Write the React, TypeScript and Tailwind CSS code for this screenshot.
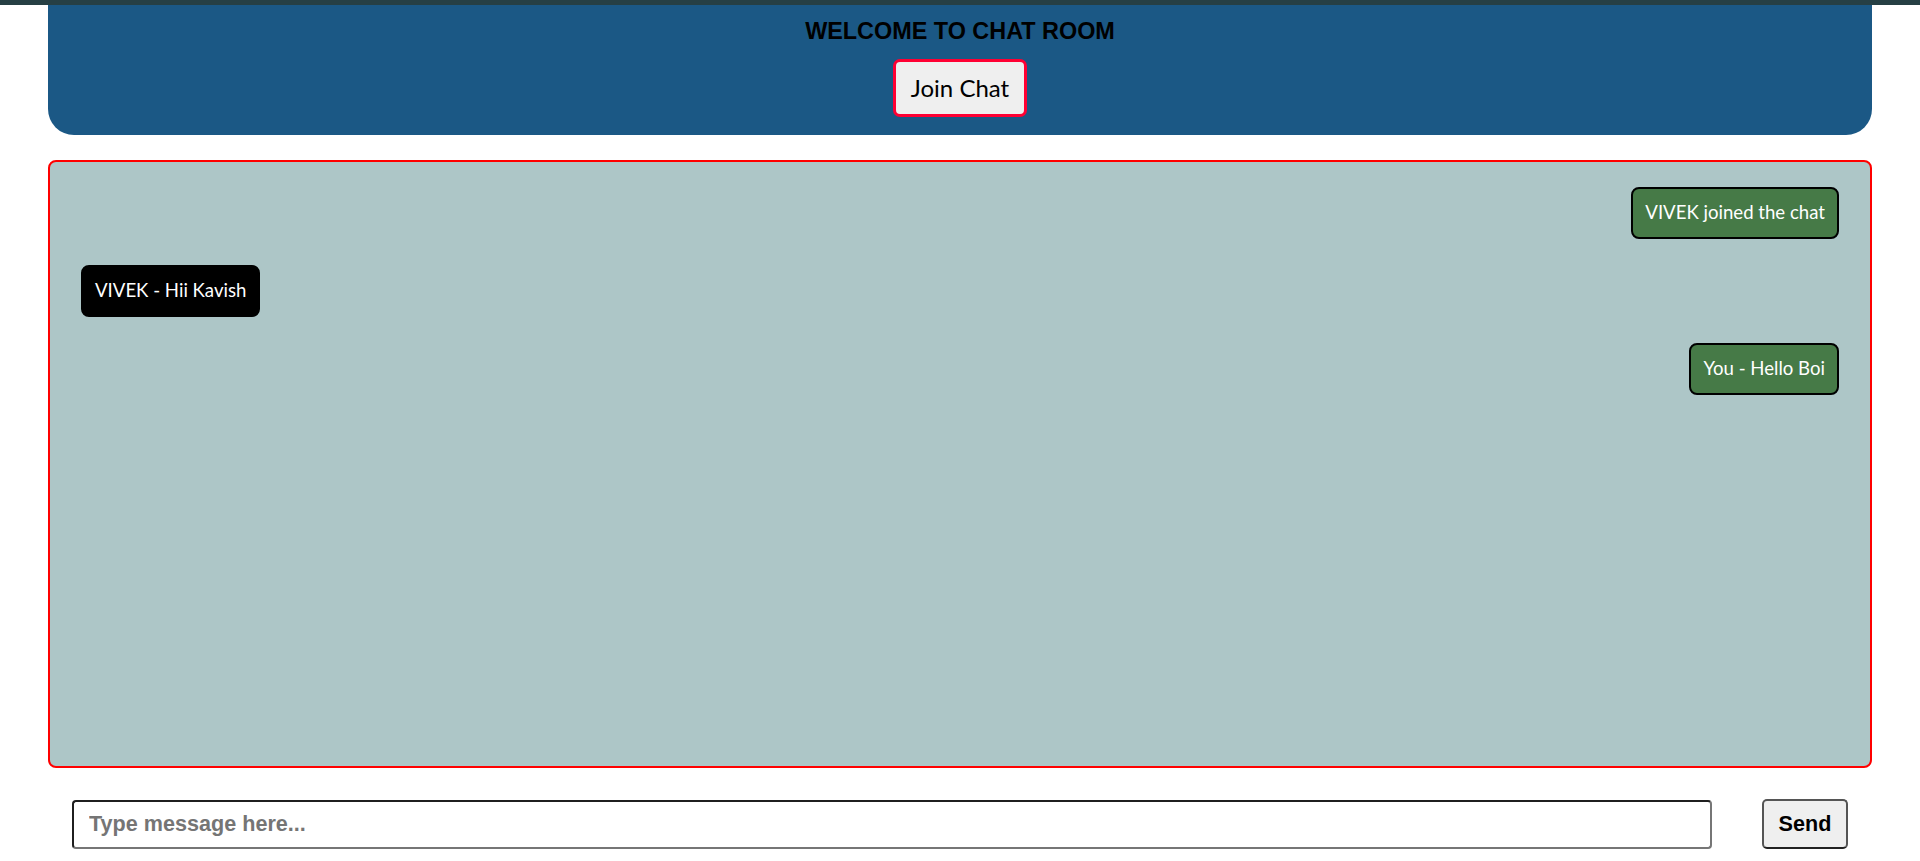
import React from "react";

const gill = { fontFamily: "'Lato', 'Open Sans', sans-serif" };

type Msg = { text: string; side: "left" | "right"; kind: "join" | "in" | "out" };

const messages: Msg[] = [
  { text: "VIVEK joined the chat", side: "right", kind: "join" },
  { text: "VIVEK - Hii Kavish", side: "left", kind: "in" },
  { text: "You - Hello Boi", side: "right", kind: "out" },
];

export default function App() {
  return (
    <div className="min-h-[861px] bg-white border-t-[5px] border-[#263f44]" style={{ fontFamily: "'Liberation Sans', Arial, sans-serif" }}>
      {/* Header */}
      <div className="mx-auto w-[1824px] bg-[#1b5885] rounded-b-[26px] pt-[13px] pb-[18px] flex flex-col items-center">
        <h2 className="text-[23.4px] leading-[26px] font-bold text-black">WELCOME TO CHAT ROOM</h2>
        <button
          className="mt-[15px] h-[58px] w-[134px] rounded-[7px] border-[3px] border-[#ff0033] bg-[#efefef] text-[24px] text-black"
          style={gill}
        >
          Join Chat
        </button>
      </div>

      {/* Messages */}
      <div className="mx-auto mt-[25px] w-[1824px] h-[608px] rounded-lg border-2 border-[#ff0000] bg-[#adc6c7] flex flex-col gap-[26px] pt-[25px] px-[31px]">
        {messages.map((m, i) => (
          <div
            key={i}
            className={
              "h-[52px] flex items-center px-[12px] rounded-lg border-2 border-black text-white text-[18.6px] " +
              (m.side === "right" ? "self-end " : "self-start ") +
              (m.kind === "in" ? "bg-black" : "bg-[#467a47]")
            }
            style={gill}
          >
            {m.text}
          </div>
        ))}
      </div>

      {/* Input row */}
      <div className="mx-auto mt-[31px] w-[1824px] px-[24px] flex items-center gap-[50px]">
        <input
          type="text"
          placeholder="Type message here..."
          className="flex-1 h-[49px] rounded-[4px] border-2 border-t-[#1f1f1f] border-l-[#1f1f1f] border-b-[#767676] border-r-[#767676] bg-white px-[15px] text-[21.6px] font-bold placeholder:text-[#757575] outline-none"
        />
        <button className="h-[50px] w-[86px] rounded-[5px] border-2 border-[#555555] border-b-[#222222] bg-[#efefef] text-[21.6px] font-bold text-black">
          Send
        </button>
      </div>
    </div>
  );
}
